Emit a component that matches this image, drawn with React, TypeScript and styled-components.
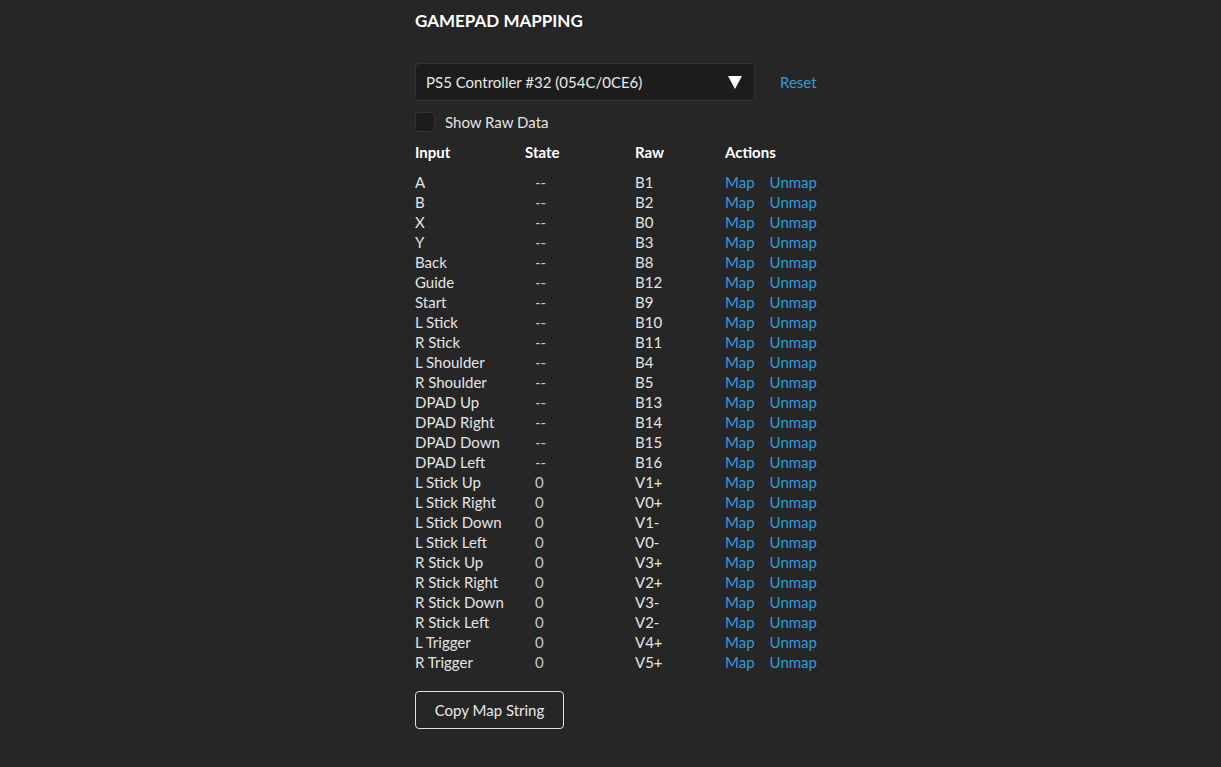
import React from "react";
import styled, { createGlobalStyle } from "styled-components";

const GlobalStyle = createGlobalStyle`
  html, body {
    margin: 0;
    padding: 0;
    background: #262626;
  }
  body {
    font-family: Lato, "Noto Sans", sans-serif;
    color: #e4e4e4;
  }
`;

const Page = styled.div`
  min-height: 767px;
  display: flex;
  justify-content: center;
`;

const Column = styled.div`
  width: 391px;
  padding-top: 10px;
  box-sizing: border-box;
`;

const Title = styled.h1`
  margin: 0;
  font-size: 17px;
  font-weight: 700;
  color: #ffffff;
  line-height: 22px;
`;

const SelectRow = styled.div`
  display: flex;
  align-items: center;
  gap: 25px;
  margin-top: 31px;
`;

const Select = styled.div`
  flex-shrink: 0;
  width: 340px;
  height: 38px;
  box-sizing: border-box;
  background: #1c1c1c;
  border: 1px solid #333;
  border-radius: 4px;
  display: flex;
  align-items: center;
  justify-content: space-between;
  padding: 0 12px 0 10px;
  font-size: 15px;
  color: #e8e8e8;
`;

const Arrow = styled.span`
  width: 0;
  height: 0;
  border-left: 7px solid transparent;
  border-right: 7px solid transparent;
  border-top: 13px solid #ffffff;
`;

const Link = styled.a`
  flex-shrink: 0;
  color: #2e9be0;
  font-size: 15px;
  text-decoration: none;
  cursor: pointer;
`;

const CheckRow = styled.label`
  display: flex;
  align-items: center;
  gap: 10px;
  margin-top: 11px;
  font-size: 15px;
`;

const Box = styled.span`
  width: 20px;
  height: 20px;
  box-sizing: border-box;
  background: #1c1c1c;
  border: 1px solid #333;
  border-radius: 4px;
`;

const Table = styled.div`
  margin-top: 10px;
  display: grid;
  grid-template-columns: 110px 110px 90px auto;
  font-size: 15px;
`;

const Head = styled.div`
  font-weight: 700;
  color: #ffffff;
  line-height: 20px;
  height: 30px;
`;

const Cell = styled.div<{ $pad?: boolean }>`
  line-height: 20px;
  height: 20px;
  white-space: nowrap;
  padding-left: ${(p) => (p.$pad ? "10px" : "0")};
  color: ${(p) => (p.$pad ? "#c8c8c8" : "#e4e4e4")};
`;

const Actions = styled.div`
  display: flex;
  gap: 15px;
  line-height: 20px;
  height: 20px;
`;

const Button = styled.button`
  margin-top: 19px;
  width: 149px;
  height: 38px;
  background: transparent;
  border: 1px solid #e0e0e0;
  border-radius: 4px;
  color: #e8e8e8;
  font-family: inherit;
  font-size: 15px;
`;

const rows: [string, string, string][] = [
  ["A", "--", "B1"],
  ["B", "--", "B2"],
  ["X", "--", "B0"],
  ["Y", "--", "B3"],
  ["Back", "--", "B8"],
  ["Guide", "--", "B12"],
  ["Start", "--", "B9"],
  ["L Stick", "--", "B10"],
  ["R Stick", "--", "B11"],
  ["L Shoulder", "--", "B4"],
  ["R Shoulder", "--", "B5"],
  ["DPAD Up", "--", "B13"],
  ["DPAD Right", "--", "B14"],
  ["DPAD Down", "--", "B15"],
  ["DPAD Left", "--", "B16"],
  ["L Stick Up", "0", "V1+"],
  ["L Stick Right", "0", "V0+"],
  ["L Stick Down", "0", "V1-"],
  ["L Stick Left", "0", "V0-"],
  ["R Stick Up", "0", "V3+"],
  ["R Stick Right", "0", "V2+"],
  ["R Stick Down", "0", "V3-"],
  ["R Stick Left", "0", "V2-"],
  ["L Trigger", "0", "V4+"],
  ["R Trigger", "0", "V5+"],
];

export default function App() {
  return (
    <Page>
      <GlobalStyle />
      <Column>
        <Title>GAMEPAD MAPPING</Title>
        <SelectRow>
          <Select>
            <span>PS5 Controller #32 (054C/0CE6)</span>
            <Arrow />
          </Select>
          <Link>Reset</Link>
        </SelectRow>
        <CheckRow>
          <Box />
          Show Raw Data
        </CheckRow>
        <Table>
          <Head>Input</Head>
          <Head>State</Head>
          <Head>Raw</Head>
          <Head>Actions</Head>
          {rows.map(([input, state, raw]) => (
            <React.Fragment key={input}>
              <Cell>{input}</Cell>
              <Cell $pad>{state}</Cell>
              <Cell>{raw}</Cell>
              <Actions>
                <Link>Map</Link>
                <Link>Unmap</Link>
              </Actions>
            </React.Fragment>
          ))}
        </Table>
        <Button>Copy Map String</Button>
      </Column>
    </Page>
  );
}
